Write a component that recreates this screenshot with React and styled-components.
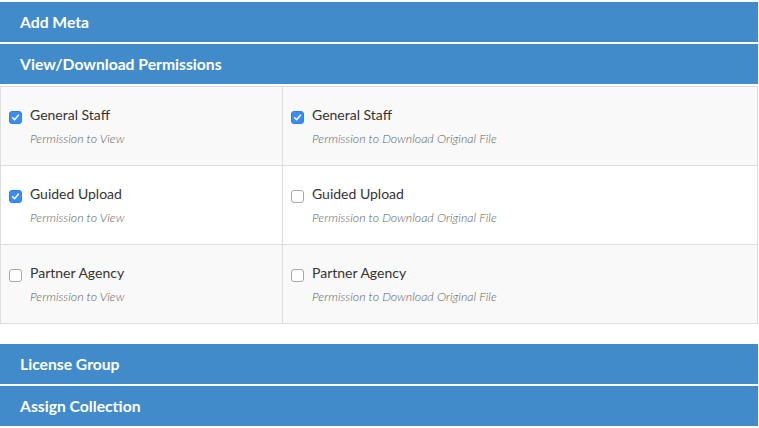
import React from "react";
import styled, { createGlobalStyle } from "styled-components";

const GlobalStyle = createGlobalStyle`
  body {
    margin: 0;
    background: #fff;
    font-family: Lato, "Open Sans", sans-serif;
  }
`;

const Wrapper = styled.div`
  width: 758px;
  padding-top: 2px;
  display: flex;
  flex-direction: column;
`;

const PanelHeader = styled.div`
  height: 40px;
  margin-bottom: 2px;
  padding-left: 20px;
  display: flex;
  align-items: center;
  background: #428bca;
  color: #fff;
  font-size: 15.7px;
  font-weight: 700;
  box-sizing: border-box;
`;

const PermissionTable = styled.div`
  display: grid;
  grid-template-columns: 281px 1fr;
  border: 1px solid #ddd;
  margin-bottom: 20px;
`;

const Cell = styled.div`
  padding: 18px 8px 0;
  box-sizing: border-box;
  background: ${(p) => (p.$striped ? "#f9f9f9" : "#fff")};
  border-top: ${(p) => (p.$first ? "none" : "1px solid #ddd")};
  border-left: ${(p) => (p.$right ? "1px solid #ddd" : "none")};
  height: ${(p) => (p.$first ? "78px" : "79px")};
`;

const LabelRow = styled.div`
  display: flex;
  align-items: flex-start;
  gap: 8px;
`;

const Box = styled.span`
  width: 13px;
  height: 13px;
  margin-top: 6px;
  flex: none;
  box-sizing: border-box;
  border-radius: 3px;
  display: grid;
  place-items: center;
  background: ${(p) => (p.$checked ? "#3a8cf6" : "#fff")};
  border: 1px solid ${(p) => (p.$checked ? "#2f7ee8" : "#a8a8a8")};
`;

const TextBlock = styled.div`
  display: flex;
  flex-direction: column;
`;

const Title = styled.span`
  font-size: 14px;
  line-height: 20px;
  color: #333;
`;

const Subtitle = styled.span`
  margin-top: 5px;
  font-size: 12.4px;
  line-height: 17px;
  font-style: italic;
  font-weight: 300;
  color: #5e5e5e;
`;

const Check = () => (
  <svg width="9" height="9" viewBox="0 0 9 9">
    <path d="M1.6 4.8 L3.6 6.8 L7.4 2.2" fill="none" stroke="#fff" strokeWidth="1.5" strokeLinecap="round" strokeLinejoin="round" />
  </svg>
);

const rows = [
  { group: "General Staff", view: true, download: true },
  { group: "Guided Upload", view: true, download: false },
  { group: "Partner Agency", view: false, download: false },
];

function Permission({ title, note, checked, striped, first, right }) {
  return (
    <Cell $striped={striped} $first={first} $right={right}>
      <LabelRow>
        <Box $checked={checked}>{checked && <Check />}</Box>
        <TextBlock>
          <Title>{title}</Title>
          <Subtitle>{note}</Subtitle>
        </TextBlock>
      </LabelRow>
    </Cell>
  );
}

export default function App() {
  return (
    <>
      <GlobalStyle />
      <Wrapper>
        <PanelHeader>Add Meta</PanelHeader>
        <PanelHeader>View/Download Permissions</PanelHeader>
        <PermissionTable>
          {rows.map((r, i) => (
            <React.Fragment key={r.group}>
              <Permission
                title={r.group}
                note="Permission to View"
                checked={r.view}
                striped={i % 2 === 0}
                first={i === 0}
              />
              <Permission
                title={r.group}
                note="Permission to Download Original File"
                checked={r.download}
                striped={i % 2 === 0}
                first={i === 0}
                right
              />
            </React.Fragment>
          ))}
        </PermissionTable>
        <PanelHeader>License Group</PanelHeader>
        <PanelHeader>Assign Collection</PanelHeader>
      </Wrapper>
    </>
  );
}
